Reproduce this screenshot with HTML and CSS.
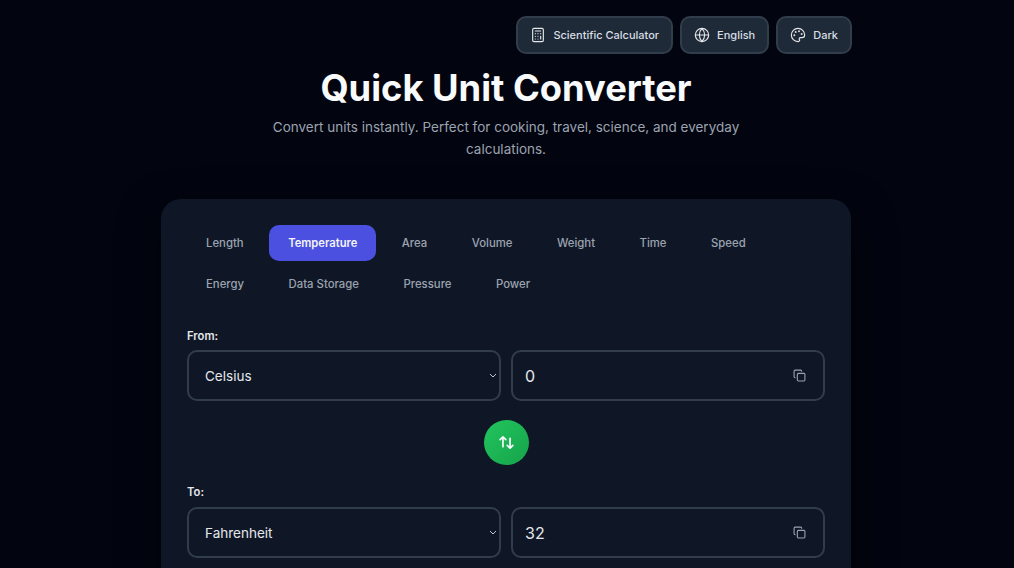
FILE: index.html
```html
<!DOCTYPE html>
<html lang="en">
<head>
<meta charset="utf-8">
<title>Quick Unit Converter</title>
<link rel="stylesheet" href="styles.css">
</head>
<body>
<main class="page">
  <nav class="toolbar">
    <button class="tool">
      <svg class="tool-icon" viewBox="0 0 24 24"><rect x="4" y="2" width="16" height="20" rx="2"/><path d="M8 6h8M16 14v4M8 10h.01M12 10h.01M16 10h.01M8 14h.01M12 14h.01M8 18h.01M12 18h.01"/></svg>
      Scientific Calculator
    </button>
    <button class="tool">
      <svg class="tool-icon" viewBox="0 0 24 24"><circle cx="12" cy="12" r="10"/><path d="M2 12h20M12 2a15.3 15.3 0 0 1 4 10 15.3 15.3 0 0 1-4 10 15.3 15.3 0 0 1-4-10 15.3 15.3 0 0 1 4-10z"/></svg>
      English
    </button>
    <button class="tool">
      <svg class="tool-icon" viewBox="0 0 24 24"><path d="M12 22a10 10 0 1 1 10-10c0 2.8-2.2 4-4 4h-2.5a1.8 1.8 0 0 0-1.3 3c.7.8.3 3-2.200 3z"/><circle cx="13.500" cy="6.500" r=".6"/><circle cx="17.500" cy="10.500" r=".6"/><circle cx="8.500" cy="7.500" r=".6"/><circle cx="6.500" cy="12.500" r=".6"/></svg>
      Dark
    </button>
  </nav>
  <header class="hero">
    <h1 class="title">Quick Unit Converter</h1>
    <p class="subtitle">Convert units instantly. Perfect for cooking, travel, science, and everyday calculations.</p>
  </header>
  <section class="card">
    <div class="tabs">
      <button class="tab">Length</button>
      <button class="tab tab-active">Temperature</button>
      <button class="tab">Area</button>
      <button class="tab">Volume</button>
      <button class="tab">Weight</button>
      <button class="tab">Time</button>
      <button class="tab">Speed</button>
      <button class="tab">Energy</button>
      <button class="tab">Data Storage</button>
      <button class="tab">Pressure</button>
      <button class="tab">Power</button>
    </div>
    <label class="field-label">From:</label>
    <div class="field-row">
      <select class="unit"><option>Celsius</option><option>Fahrenheit</option><option>Kelvin</option></select>
      <div class="value-box">
        <input class="value" value="0">
        <svg class="copy" viewBox="0 0 24 24"><rect x="8" y="8" width="14" height="14" rx="2"/><path d="M4 16c-1.100 0-2-.9-2-2V4c0-1.100.9-2 2-2h10c1.100 0 2 .9 2 2"/></svg>
      </div>
    </div>
    <div class="swap-row">
      <button class="swap" aria-label="Swap units">
        <svg class="swap-icon" viewBox="0 0 24 24"><path d="M3 8l4-4 4 4M7 4v14M21 16l-4 4-4-4M17 20V6"/></svg>
      </button>
    </div>
    <label class="field-label field-label-to">To:</label>
    <div class="field-row">
      <select class="unit"><option>Fahrenheit</option><option>Celsius</option><option>Kelvin</option></select>
      <div class="value-box">
        <input class="value" value="32">
        <svg class="copy" viewBox="0 0 24 24"><rect x="8" y="8" width="14" height="14" rx="2"/><path d="M4 16c-1.100 0-2-.9-2-2V4c0-1.100.9-2 2-2h10c1.100 0 2 .9 2 2"/></svg>
      </div>
    </div>
  </section>
</main>
</body>
</html>
```

FILE: styles.css
```css
* { box-sizing: border-box; }

html, body {
  height: 568px;
  margin: 0;
  overflow: hidden;
  background: #02050f;
  color-scheme: dark;
  font-family: Inter, "Liberation Sans", sans-serif;
}

body {
  padding-right: 2px;
}

.page {
  width: 690px;
  margin: 0 auto;
  padding-top: 16px;
}

.toolbar {
  display: flex;
  justify-content: flex-end;
  gap: 7px;
  margin-right: -1px;
}

.tool {
  display: flex;
  align-items: center;
  gap: 7px;
  height: 38px;
  padding: 0 12px;
  border: 2px solid #323d4c;
  border-radius: 10px;
  background: #1f2a38;
  color: #d8dde3;
  font: 500 11px Inter, sans-serif;
}

.tool-icon {
  width: 16px;
  height: 16px;
  fill: none;
  stroke: #e5e7eb;
  stroke-width: 1.7;
  stroke-linecap: round;
  stroke-linejoin: round;
}

.hero {
  text-align: center;
  margin-top: 12px;
}

.title {
  margin: 0;
  color: #f8fafc;
  font-size: 36.3px;
  line-height: 44px;
  font-weight: 700;
}

.subtitle {
  width: 480px;
  margin: 6px auto 0;
  color: #9ca3af;
  font-size: 13.5px;
  line-height: 22px;
}

.card {
  margin-top: 39px;
  height: 420px;
  padding: 26px;
  border-radius: 20px;
  background: #0f1727;
  box-shadow: 0 16px 40px rgba(0, 0, 0, 0.5);
}

.tabs {
  display: flex;
  flex-wrap: wrap;
  gap: 5px 6.5px;
}

.tab {
  height: 36px;
  padding: 0 19px;
  border: 0;
  border-radius: 10px;
  background: transparent;
  color: #9ca3af;
  font: 550 11.35px Inter, sans-serif;
}

.tab-active {
  background: #4c50e0;
  color: #f3f4f6;
  font-weight: 600;
  font-size: 11.2px;
}

.field-label {
  display: block;
  margin: 27px 0 7px;
  color: #e5e7eb;
  font-size: 11.25px;
  line-height: 14px;
  font-weight: 600;
}

.field-label-to {
  margin-top: 20px;
  margin-bottom: 8px;
}

.field-row {
  display: grid;
  grid-template-columns: 1fr 1fr;
  gap: 10px;
}

.unit,
.value-box {
  height: 51px;
  border: 2px solid #323d4c;
  border-radius: 10px;
  background-color: #0f1727;
  color: #e5e7eb;
  font: 400 13.5px Inter, sans-serif;
}

.unit {
  width: 100%;
  padding: 0 0 0 16px;
  appearance: none;
  background-image: url("data:image/svg+xml,%3Csvg xmlns='http://www.w3.org/2000/svg' viewBox='0 0 8 5'%3E%3Cpath d='M1 1l3 3 3-3' fill='none' stroke='%23c3c8cf' stroke-width='1'/%3E%3C/svg%3E");
  background-repeat: no-repeat;
  background-position: right 2px center;
  background-size: 8px 5px;
}

.value-box {
  display: flex;
  align-items: center;
  padding: 0 17px 0 12px;
}

.value {
  flex: 1;
  min-width: 0;
  padding: 0;
  border: 0;
  outline: 0;
  background: transparent;
  color: #e5e7eb;
  font: 400 16px Inter, sans-serif;
}

.copy {
  width: 13px;
  height: 13px;
  fill: none;
  stroke: #9ca3af;
  stroke-width: 2;
  stroke-linecap: round;
  stroke-linejoin: round;
}

.swap-row {
  display: flex;
  justify-content: center;
  margin-top: 19px;
}

.swap {
  display: flex;
  align-items: center;
  justify-content: center;
  width: 45px;
  height: 45px;
  padding: 0;
  border: 0;
  border-radius: 50%;
  background: linear-gradient(135deg, #22c55e, #16a34a);
}

.swap-icon {
  width: 17px;
  height: 17px;
  fill: none;
  stroke: #f8fafc;
  stroke-width: 2.4;
  stroke-linecap: round;
  stroke-linejoin: round;
}
```
